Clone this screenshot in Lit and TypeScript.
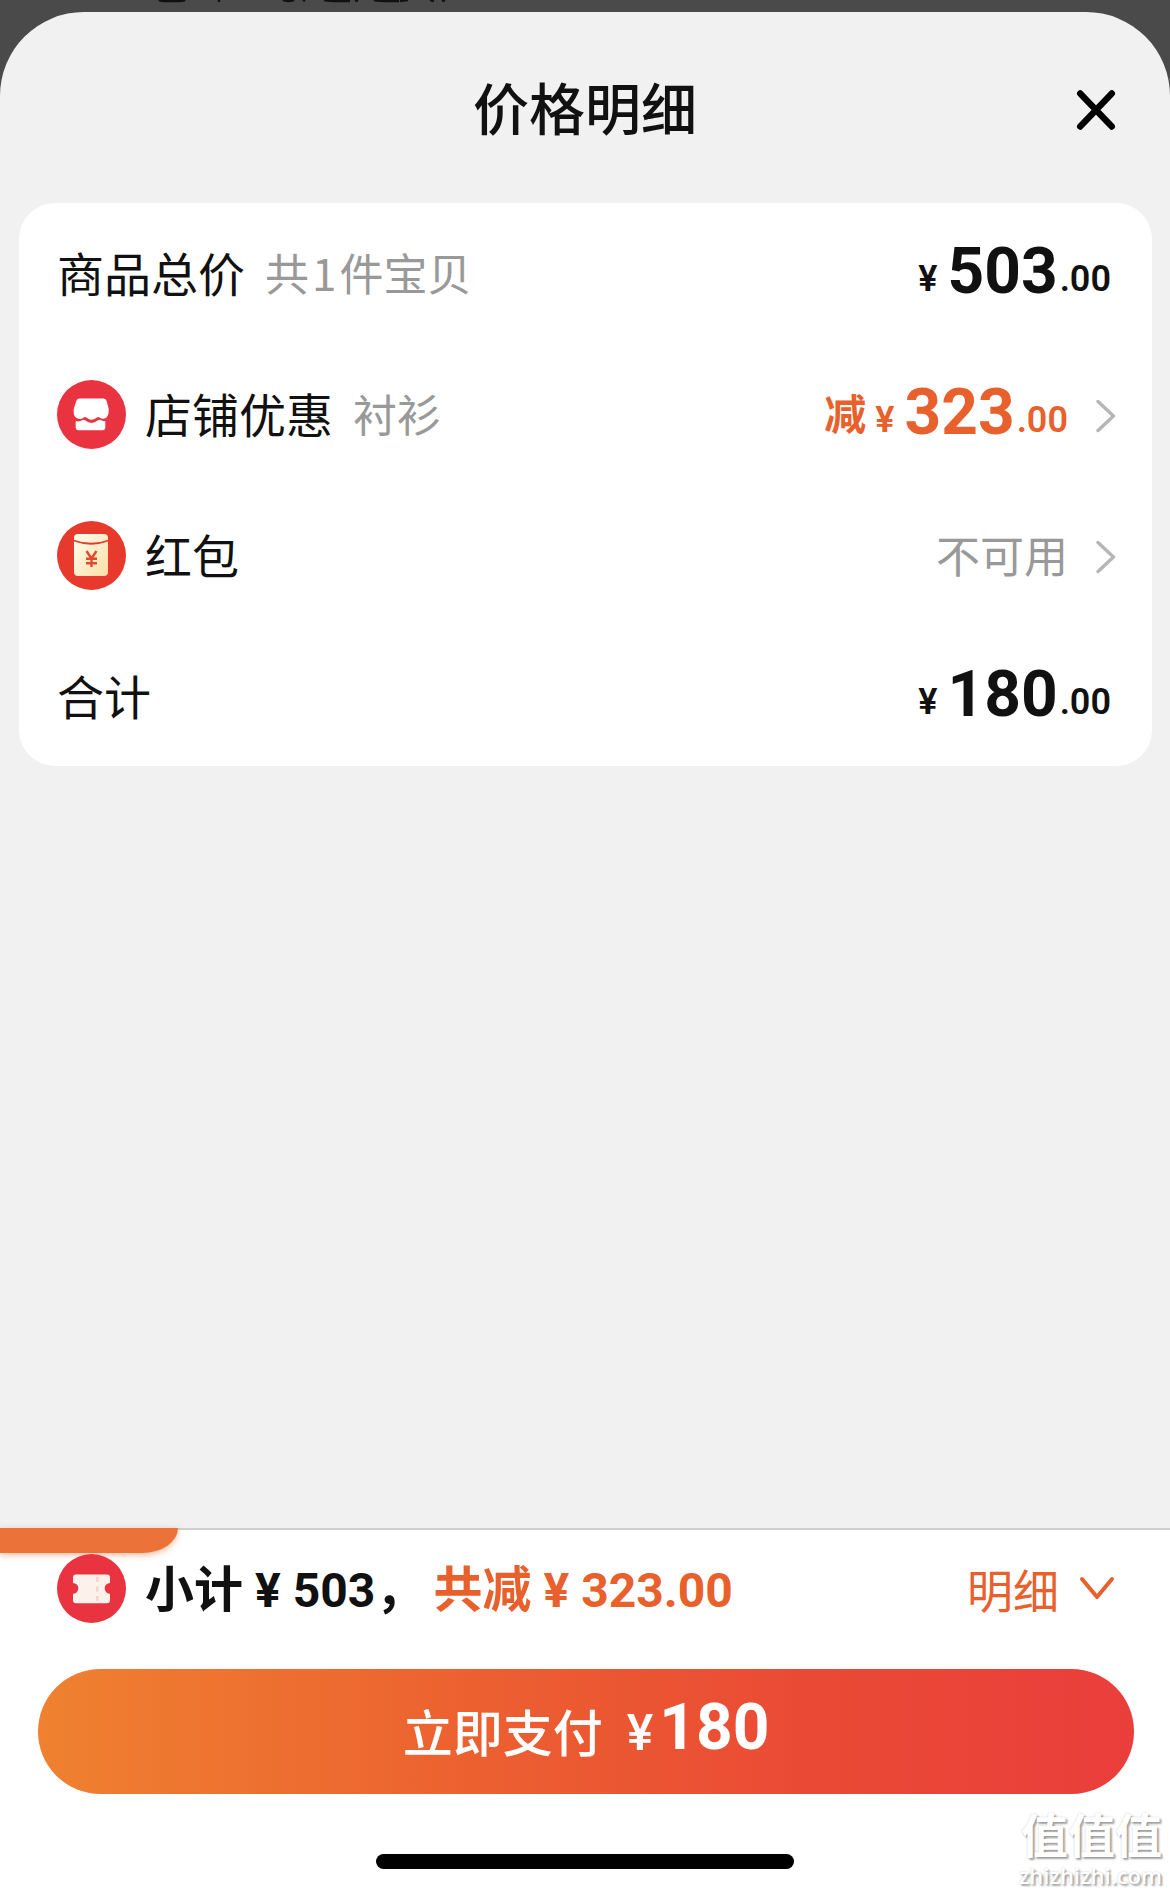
import { LitElement, html, css, nothing } from "lit";
import { customElement, property } from "lit/decorators.js";

const CJK = css`"Noto Sans CJK SC", sans-serif`;

const shopIcon = html`<svg class="badge" viewBox="0 0 69 69" aria-hidden="true">
  <circle cx="34.5" cy="34.5" r="34.5" fill="#ea3341" />
  <path fill="#fff" d="M22.500 18.500h24q2.200 0 3 2.200l2 7.300q.500 2 0 5.200-1 5-5.200 5.500-1.500.300-3.500-1-1.700-1.200-3.300 0-2.500 2.100-5 2.100t-4.800-2.100q-1.700-1.200-3.300 0-2.500 1.800-5 1-4.200-1.200-4.700-5.500-.300-3.200.300-5.200l2.400-7.300q.900-2.200 3.100-2.200z" />
  <path fill="#fff" d="M18.700 41q3.500 1.300 6.800-1 1.400-.700 2.600.300 3.200 2.600 6.400 2.600t6.400-2.600q1.200-1 2.600-.300 2.500 1.600 4.800 1v6.800q0 2.400-2.400 2.400h-24.800q-2.400 0-2.400-2.400z" />
</svg>`;

const packetIcon = html`<svg class="badge" viewBox="0 0 69 69" aria-hidden="true">
  <defs>
    <linearGradient id="paper" x1="0" y1="0" x2="1" y2="1">
      <stop offset="0" stop-color="#fffdf0" />
      <stop offset="1" stop-color="#fbdfa6" />
    </linearGradient>
  </defs>
  <circle cx="34.500" cy="34.500" r="34.500" fill="#e83a2c" />
  <rect x="17" y="13" width="34" height="42" rx="4" fill="url(#paper)" />
  <path d="M16.500 19.500q18 6.500 35 0" fill="none" stroke="#e83a2c" stroke-width="1.800" />
  <path d="M29.500 30l5 7.500 5-7.500M34.500 37.500v8.500M29 37.800h11M29 42.300h11" fill="none" stroke="#e2492f" stroke-width="2.400" />
</svg>`;

const couponIcon = html`<svg class="badge" viewBox="0 0 69 69" aria-hidden="true">
  <circle cx="34.500" cy="34.500" r="34.500" fill="#ea3341" />
  <path fill="#fdf1ec" d="M19 20.500h31q3 0 3 3v5.500a5.200 5.200 0 0 0 0 10.700v6.500q0 3-3 3h-31q-3 0-3-3v-6.500a5.200 5.200 0 0 0 0-10.700v-5.500q0-3 3-3z" />
  <path d="M40.300 23v24" stroke="#f8d3cc" stroke-width="2.600" stroke-dasharray="5 4.500" />
</svg>`;

const chevronRight = html`<svg class="chevron" viewBox="0 0 20 34" aria-hidden="true">
  <path d="M2 2.500l15.500 14.500l-15.500 14.500" fill="none" stroke="#b6b6b6" stroke-width="3.400" stroke-linecap="round" stroke-linejoin="round" />
</svg>`;

@customElement("price-amount")
class PriceAmount extends LitElement {
  @property() whole = "";
  @property() cents = "";

  static styles = css`
    :host {
      display: block;
      font-family: Roboto, sans-serif;
      font-weight: 700;
      white-space: nowrap;
    }
    .amount {
      display: flex;
      align-items: flex-end;
    }
    .small {
      font-size: 36px;
      line-height: 50px;
      font-weight: 600;
    }
    .sign {
      margin-right: 10px;
    }
    .cents {
      margin-left: 2px;
    }
    .whole {
      font-size: 64px;
      line-height: 64px;
    }
    :host([large]) .sign {
      margin-right: 6px;
      font-size: 50px;
      line-height: 54px;
      font-weight: 500;
    }
  `;

  render() {
    return html`<div class="amount">
      <span class="small sign">¥</span><span class="whole">${this.whole}</span>
      ${this.cents ? html`<span class="small cents">.${this.cents}</span>` : nothing}
    </div>`;
  }
}

@customElement("app-root")
class AppRoot extends LitElement {
  static styles = css`
    :host {
      display: flex;
      flex-direction: column;
      min-height: 100vh;
      background: #4a4a4a;
      color: #111;
      font-family: ${CJK};
    }
    * {
      box-sizing: border-box;
    }
    button {
      margin: 0;
      padding: 0;
      border: 0;
      background: none;
      color: inherit;
      font: inherit;
      cursor: pointer;
    }
    .backdrop {
      height: 12px;
      padding-left: 153px;
    }
    .backdrop svg {
      display: block;
      width: 300px;
      height: 4px;
    }
    .sheet {
      flex: 1;
      display: flex;
      flex-direction: column;
      overflow: hidden;
      border-radius: 84px 84px 0 0;
      background: #f1f1f1;
    }
    .header {
      display: grid;
      grid-template-columns: 1fr auto 1fr;
      align-items: center;
      height: 191px;
      padding: 0 52px;
    }
    .title {
      grid-column: 2;
      margin: 0;
      padding-bottom: 4px;
      font-size: 56px;
      font-weight: 500;
      line-height: 80px;
    }
    .close {
      justify-self: end;
      display: flex;
      padding-top: 4px;
    }
    .close svg {
      width: 44px;
      height: 44px;
    }
    .card {
      display: grid;
      grid-auto-rows: 140px;
      row-gap: 1px;
      margin: 0 18px 0 19px;
      padding: 0 36px 0 38px;
      border-radius: 36px;
      background: #fff;
    }
    .row {
      display: flex;
      align-items: center;
      width: 100%;
      text-align: left;
    }
    .label,
    .note {
      padding-bottom: 2px;
      line-height: 64px;
    }
    .label {
      font-size: 47px;
    }
    .note {
      color: #999;
      font-size: 44px;
    }
    .label + .note {
      margin-left: 20px;
    }
    .digit {
      margin: 0 3px;
    }
    .badge {
      flex: none;
      width: 69px;
      height: 69px;
      margin-right: 19px;
    }
    .value {
      display: flex;
      align-items: center;
      margin-left: auto;
    }
    .price {
      margin: 0 5px 0 auto;
      padding-bottom: 2px;
    }
    .value price-amount {
      padding-bottom: 2px;
    }
    .accent {
      color: #e8602c;
    }
    .minus {
      margin-right: 9px;
      padding-bottom: 4px;
      font-size: 42px;
      font-weight: 700;
      line-height: 64px;
    }
    .chevron {
      width: 20px;
      height: 34px;
      margin: 4px 0 0 28px;
    }
    .footer {
      display: flex;
      flex-direction: column;
      position: relative;
      margin-top: auto;
      padding: 24px 36px;
      border-top: 2px solid #cfcfcf;
      background: #fff;
    }
    .tab {
      position: absolute;
      left: 0;
      top: -2px;
      width: 178px;
      height: 25px;
      border-radius: 0 0 36px 0 / 0 0 25px 0;
      background: #eb733a;
      box-shadow: 0 2px 6px rgba(235, 115, 58, 0.5);
    }
    .summary {
      position: relative;
      display: flex;
      align-items: center;
      height: 69px;
      padding: 0 19px 0 21px;
    }
    .sum {
      display: flex;
      align-items: baseline;
      font-size: 49px;
      font-weight: 700;
      line-height: 64px;
      white-space: nowrap;
    }
    .sum + .sum {
      margin-left: 9px;
    }
    .num {
      font-family: Roboto, sans-serif;
      font-size: 48px;
    }
    .yen {
      margin: 0 12px;
    }
    .more {
      display: flex;
      align-items: center;
      gap: 20px;
      margin-left: auto;
      padding-bottom: 2px;
      font-size: 46px;
      line-height: 64px;
    }
    .more svg {
      width: 36px;
      height: 24px;
    }
    .pay {
      display: flex;
      justify-content: center;
      align-items: center;
      gap: 24px;
      height: 125px;
      margin: 46px 0 60px 2px;
      padding-bottom: 4px;
      border-radius: 63px;
      background: linear-gradient(90deg, #ef8130, #ec6030 40%, #ea4a35 70%, #ea3e3b);
      color: #fff;
      font-size: 50px;
      font-weight: 500;
      line-height: 64px;
    }
    .pay price-amount {
      padding-bottom: 4px;
    }
    .home {
      align-self: center;
      width: 418px;
      height: 15px;
      border-radius: 8px;
      background: #000;
    }
    .mark {
      position: absolute;
      right: 8px;
      bottom: 4px;
      color: #fff;
      text-align: right;
      text-shadow: 2px 2px 2px rgba(0, 0, 0, 0.35), 0 0 2px rgba(0, 0, 0, 0.2);
    }
    .mark-name {
      font-size: 47px;
      font-weight: 700;
      line-height: 56px;
    }
    .mark-site {
      font-family: "Open Sans", sans-serif;
      font-size: 22px;
      font-weight: 600;
      line-height: 28px;
    }
  `;

  render() {
    return html`
      <div class="backdrop">
        <svg viewBox="0 0 300 4" aria-hidden="true">
          <path
            d="M6 0q1 1 5 1h15q5 0 6-1M66 0v2M130 0q4 2 11 0M150 0l2 1M171 0q6 1 16 1h10M202 0l3 1M221 0q6 1 16 1h9M247 1l8-1M277 0l4 1M289 1l3-1"
            fill="none"
            stroke="#111"
            stroke-width="2.400"
          />
        </svg>
      </div>
      <section class="sheet" aria-label="价格明细">
        <header class="header">
          <h1 class="title">价格明细</h1>
          <button class="close" aria-label="关闭">
            <svg viewBox="0 0 44 44" aria-hidden="true">
              <path d="M6.200 5.500l31.600 33M37.800 5.500l-31.600 33" stroke="#000" stroke-width="6.400" stroke-linecap="round" />
            </svg>
          </button>
        </header>
        <div class="card">
          <div class="row">
            <span class="label">商品总价</span>
            <span class="note">共<span class="digit">1</span>件宝贝</span>
            <price-amount class="price" whole="503" cents="00"></price-amount>
          </div>
          <button class="row">
            ${shopIcon}
            <span class="label">店铺优惠</span>
            <span class="note">衬衫</span>
            <span class="value accent">
              <span class="minus">减</span>
              <price-amount whole="323" cents="00"></price-amount>
              ${chevronRight}
            </span>
          </button>
          <button class="row">
            ${packetIcon}
            <span class="label">红包</span>
            <span class="value"><span class="note">不可用</span>${chevronRight}</span>
          </button>
          <div class="row">
            <span class="label">合计</span>
            <price-amount class="price" whole="180" cents="00"></price-amount>
          </div>
        </div>
        <footer class="footer">
          <div class="tab"></div>
          <div class="summary">
            ${couponIcon}
            <span class="sum">小计<span class="num yen">¥</span><span class="num">503</span>，</span>
            <span class="sum accent">共减<span class="num yen">¥</span><span class="num">323.00</span></span>
            <button class="more accent">
              明细
              <svg viewBox="0 0 36 24" aria-hidden="true">
                <path d="M3 3l15 18l15-18" fill="none" stroke="currentColor" stroke-width="4" stroke-linecap="round" stroke-linejoin="round" />
              </svg>
            </button>
          </div>
          <button class="pay">立即支付<price-amount large whole="180"></price-amount></button>
          <div class="home"></div>
          <div class="mark">
            <div class="mark-name">值值值</div>
            <div class="mark-site">zhizhizhi.com</div>
          </div>
        </footer>
      </section>
    `;
  }
}
